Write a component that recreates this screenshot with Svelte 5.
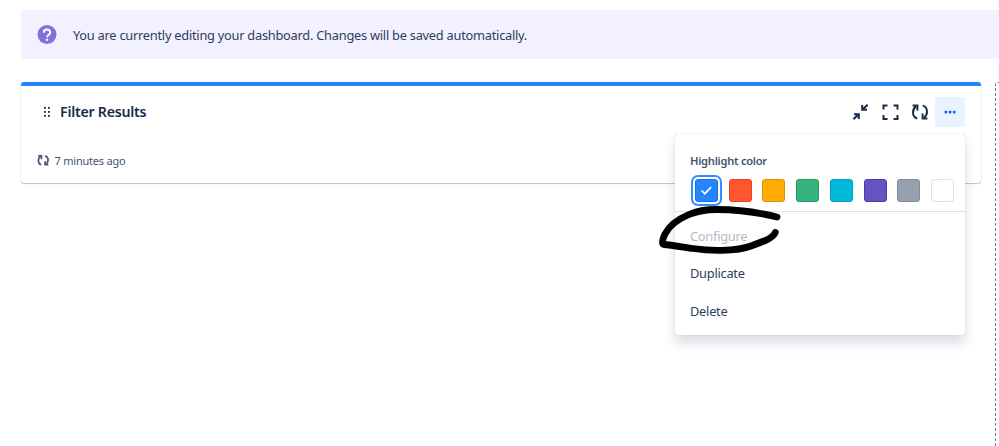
<script lang="ts">
	/**
	 * Dashboard edit view - one gadget with its options menu open.
	 */
	interface Swatch {
		name: string;
		fill: string;
		border: string;
	}

	const swatches: Swatch[] = [
		{ name: 'Blue', fill: '#2684ff', border: '#1672ee' },
		{ name: 'Red', fill: '#ff5630', border: '#e5431f' },
		{ name: 'Yellow', fill: '#ffab00', border: '#df8f00' },
		{ name: 'Green', fill: '#36b37e', border: '#239965' },
		{ name: 'Teal', fill: '#00b8d9', border: '#00a0c3' },
		{ name: 'Purple', fill: '#6554c0', border: '#5038ae' },
		{ name: 'Gray', fill: '#97a0af', border: '#7e899c' },
		{ name: 'White', fill: '#ffffff', border: '#dedfe2' }
	];

	const actions = [
		{ label: 'Configure', disabled: true },
		{ label: 'Duplicate', disabled: false },
		{ label: 'Delete', disabled: false }
	];

	let selected = $state('Blue');
	let menuOpen = $state(true);
</script>

{#snippet refreshIcon(size: number, stroke: number)}
	<svg width={size} height={size} viewBox="0 0 18 18" fill="none">
		<g stroke="currentColor" stroke-width={stroke}>
			<path d="M6.2 15.6C3.6 14.6 2 12 2 9.2c0-2.3 1-4.300 3-5.800" />
			<path d="M1.6 2.5h4.800v4.900" />
			<path d="M11.800 2.400C14.400 3.400 16 6 16 8.800c0 2.300-1 4.300-3 5.800" />
			<path d="M16.400 15.500h-4.800v-4.900" />
		</g>
	</svg>
{/snippet}

<div class="dashboard">
	<div class="banner">
		<svg width="20" height="20" viewBox="0 0 20 20" fill="none">
			<circle cx="10" cy="9.5" r="9.500" fill="#8270db" />
			<path
				d="M6.800 7.700C6.800 5.700 8.100 4.500 10 4.500s3.200 1.100 3.200 2.900c0 1.300-.8 1.900-1.600 2.500-.9.600-1.500 1-1.500 2.300"
				stroke="#fff"
				stroke-width="1.900"
			/>
			<circle cx="10.100" cy="14.700" r="1.200" fill="#fff" />
		</svg>
		<span>You are currently editing your dashboard. Changes will be saved automatically.</span>
	</div>

	<div class="columns">
		<section class="gadget">
			<header>
				<svg class="grip" width="8" height="12" viewBox="0 0 8 12" fill="currentColor">
					{#each [1, 5, 9] as y}
						<rect x="1" {y} width="1.800" height="1.800" />
						<rect x="5" {y} width="1.800" height="1.800" />
					{/each}
				</svg>
				<h3>Filter Results</h3>
				<div class="tools">
					<button aria-label="Minimize">
						<svg width="18" height="18" viewBox="0 0 18 18" fill="none" stroke="currentColor" stroke-width="2">
							<path d="M11.200 2v4.800h4.800M11.600 6.400l5-4.700M3 11.200h4.800v4.800M7.400 11.600l-5 4.700" />
						</svg>
					</button>
					<button aria-label="Maximize">
						<svg width="18" height="18" viewBox="0 0 18 18" fill="none" stroke="currentColor" stroke-width="2">
							<path d="M6.500 2.500h-4v4M12.500 2.500h4v4M2.500 12v4h4M16.500 12v4h-4" />
						</svg>
					</button>
					<button aria-label="Refresh">{@render refreshIcon(18, 2)}</button>
					<button class="more" class:active={menuOpen} aria-label="More" onclick={() => (menuOpen = !menuOpen)}>
						<svg width="12" height="4" viewBox="0 0 12 4" fill="currentColor">
							<rect x="0.500" y=".700" width="2.700" height="2.700" rx=".8" />
							<rect x="4.650" y=".700" width="2.700" height="2.700" rx=".8" />
							<rect x="8.800" y=".700" width="2.700" height="2.700" rx=".8" />
						</svg>
					</button>
				</div>
			</header>
			<footer>
				{@render refreshIcon(12.5, 2.4)}
				<span>7 minutes ago</span>
			</footer>

			{#if menuOpen}
				<div class="menu">
					<div class="colors">
						<h4>Highlight color</h4>
						<div class="swatches">
							{#each swatches as s (s.name)}
								<button
									class="swatch"
									class:selected={s.name === selected}
									style:background={s.fill}
									style:border-color={s.border}
									aria-label={s.name}
									onclick={() => (selected = s.name)}
								>
									{#if s.name === selected}
										<svg width="13" height="11" viewBox="0 0 13 11" fill="none">
											<path d="M2 6l2.800 2.700L10.700 2.500" stroke="#fff" stroke-width="1.7" stroke-linecap="round" />
										</svg>
									{/if}
								</button>
							{/each}
						</div>
					</div>
					<div class="actions">
						{#each actions as action (action.label)}
							<button class="action" disabled={action.disabled}>{action.label}</button>
						{/each}
					</div>
				</div>
			{/if}
		</section>
		<div class="drop-zone"></div>
	</div>

	<svg class="marker" width="130" height="56" viewBox="655 202 130 56" fill="none">
		<path
			d="M777 217C757 212 737 209.500 717 209.500C704 209.500 697 211 689 214.500C677 219.500 669 226 665 234C662.500 239 661.500 244 664 244.500C672 245 682 247 693 248.500C703 250 712 250.500 722 250.300C733 250 742 249.500 751 246C765 241 773 238 775.300 232.500"
			stroke="#000"
			stroke-width="6.8"
			stroke-linecap="round"
			stroke-linejoin="round"
		/>
	</svg>
</div>

<style>
	:global(body) {
		background: #fff;
	}

	.dashboard {
		position: relative;
		box-sizing: border-box;
		height: 446px;
		padding: 10px 0 0 20.5px;
		display: flex;
		flex-direction: column;
		gap: 22.5px;
		overflow: hidden;
		font-family: 'Segoe UI', 'Noto Sans', sans-serif;
		font-size: 12.8px;
		letter-spacing: -0.24px;
		color: #172b4d;
	}

	.banner {
		display: flex;
		align-items: center;
		flex: none;
		gap: 16px;
		height: 49px;
		margin-left: 0.5px;
		padding-left: 16px;
		box-sizing: border-box;
		border-radius: 3px 0 0 3px;
		background: #f3f0ff;
		color: #2c3e5d;
		white-space: nowrap;
	}

	.columns {
		display: flex;
		flex: 1;
		gap: 14.5px;
	}

	.gadget {
		position: relative;
		box-sizing: border-box;
		width: 960px;
		height: 101.5px;
		flex: none;
		padding: 11px 15.5px 0 17px;
		border-top: 4px solid #2684ff;
		border-radius: 3px;
		box-shadow: 0 1px 1px rgba(9, 30, 66, 0.25), 0 0 1px rgba(9, 30, 66, 0.31);
	}

	header {
		display: flex;
		align-items: center;
		height: 30px;
	}

	.grip {
		margin: 0 9.5px 0 5px;
	}

	h3 {
		margin: 0;
		font-size: 14.2px;
		font-weight: 600;
		letter-spacing: -0.25px;
	}

	.tools {
		display: flex;
		margin-left: auto;
	}

	button {
		display: flex;
		align-items: center;
		justify-content: center;
		padding: 0;
		border: none;
		background: none;
		color: inherit;
		font: inherit;
		letter-spacing: inherit;
	}

	.tools button {
		width: 30px;
		height: 30px;
		border-radius: 3px;
	}

	.more.active {
		background: #e9f2ff;
		color: #0c66e4;
	}

	footer {
		display: flex;
		align-items: center;
		gap: 5px;
		margin: 26px 0 0 -0.5px;
		height: 16px;
		font-size: 11px;
		letter-spacing: -0.22px;
		color: #44546f;
	}

	.menu {
		position: absolute;
		top: 48.5px;
		right: 15.5px;
		box-sizing: border-box;
		width: 290px;
		height: 201px;
		border-radius: 3px;
		background: #fff;
		box-shadow: 0 8px 12px rgba(9, 30, 66, 0.15), 0 0 1px rgba(9, 30, 66, 0.31);
	}

	.colors {
		box-sizing: border-box;
		height: 78px;
		padding: 18px 11px 0 15px;
		border-bottom: 1px solid #dcdfe4;
	}

	h4 {
		margin: 0 0 9px;
		font-size: 11.2px;
		letter-spacing: -0.28px;
		line-height: 18px;
		font-weight: 600;
		color: #44546f;
	}

	.swatches {
		display: flex;
		justify-content: space-between;
		padding-left: 5px;
	}

	.swatch {
		box-sizing: border-box;
		width: 23px;
		height: 23px;
		border: 1px solid;
		border-radius: 3px;
	}

	.swatch.selected {
		box-shadow: 0 0 0 2px #fff, 0 0 0 4px #388bff;
	}

	.actions {
		padding-top: 5px;
	}

	.action {
		width: 100%;
		height: 37.5px;
		padding: 0 15px;
		justify-content: flex-start;
		color: #2c3e5d;
	}

	.action:disabled {
		color: #b6bbc7;
	}

	.drop-zone {
		flex: none;
		width: 400px;
		border: 1px dashed #6b778c;
		border-bottom: none;
		border-radius: 3px 0 0;
	}

	.marker {
		position: absolute;
		left: 655px;
		top: 202px;
	}
</style>
